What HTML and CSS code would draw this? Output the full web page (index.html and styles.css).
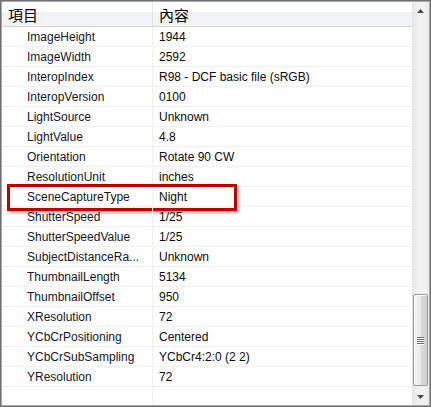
FILE: index.html
```html
<!DOCTYPE html>
<html>
<head>
<meta charset="utf-8">
<link rel="stylesheet" href="styles.css">
</head>
<body>
<div class="listview">
  <div class="content">
    <div class="header">
      <div class="hcell c1">項目</div>
      <div class="hcell c2">內容</div>
    </div>
    <div class="rows">
      <div class="row"><div class="cell c1">ImageHeight</div><div class="cell c2">1944</div></div>
      <div class="row"><div class="cell c1">ImageWidth</div><div class="cell c2">2592</div></div>
      <div class="row"><div class="cell c1">InteropIndex</div><div class="cell c2">R98 - DCF basic file (sRGB)</div></div>
      <div class="row"><div class="cell c1">InteropVersion</div><div class="cell c2">0100</div></div>
      <div class="row"><div class="cell c1">LightSource</div><div class="cell c2">Unknown</div></div>
      <div class="row"><div class="cell c1">LightValue</div><div class="cell c2">4.8</div></div>
      <div class="row"><div class="cell c1">Orientation</div><div class="cell c2">Rotate 90 CW</div></div>
      <div class="row"><div class="cell c1">ResolutionUnit</div><div class="cell c2">inches</div></div>
      <div class="row highlighted"><div class="cell c1">SceneCaptureType</div><div class="cell c2">Night</div><div class="mark"></div></div>
      <div class="row"><div class="cell c1">ShutterSpeed</div><div class="cell c2">1/25</div></div>
      <div class="row"><div class="cell c1">ShutterSpeedValue</div><div class="cell c2">1/25</div></div>
      <div class="row"><div class="cell c1">SubjectDistanceRa...</div><div class="cell c2">Unknown</div></div>
      <div class="row"><div class="cell c1">ThumbnailLength</div><div class="cell c2">5134</div></div>
      <div class="row"><div class="cell c1">ThumbnailOffset</div><div class="cell c2">950</div></div>
      <div class="row"><div class="cell c1">XResolution</div><div class="cell c2">72</div></div>
      <div class="row"><div class="cell c1">YCbCrPositioning</div><div class="cell c2">Centered</div></div>
      <div class="row"><div class="cell c1">YCbCrSubSampling</div><div class="cell c2">YCbCr4:2:0 (2 2)</div></div>
      <div class="row"><div class="cell c1">YResolution</div><div class="cell c2">72</div></div>
      <div class="row"><div class="cell c1"></div><div class="cell c2"></div></div>
    </div>
  </div>
  <div class="scrollbar">
    <div class="arrow up"><svg width="7" height="4" viewBox="0 0 7 4"><path d="M0 4 L3.5 0 L7 4 Z" fill="#4a4a4a"/></svg></div>
    <div class="track">
      <div class="thumb">
        <div class="grip"><span></span><span></span><span></span><span></span></div>
      </div>
    </div>
    <div class="arrow down"><svg width="7" height="4" viewBox="0 0 7 4"><path d="M0 0 L7 0 L3.5 4 Z" fill="#4a4a4a"/></svg></div>
  </div>
</div>
</body>
</html>
```
FILE: styles.css
```css
html, body {
  margin: 0;
  padding: 0;
  background: #ffffff;
}
.listview {
  width: 431px;
  height: 407px;
  box-sizing: border-box;
  border: 1px solid #707070;
  box-shadow: inset 0 0 0 1px #a8a8a8;
  padding: 1px;
  display: flex;
  overflow: hidden;
  font-family: "Liberation Sans", Arial, sans-serif;
  font-size: 12px;
  color: #111111;
}
.content {
  width: 410px;
  overflow: hidden;
  display: flex;
  flex-direction: column;
}
.header {
  display: flex;
  height: 24px;
  flex: 0 0 24px;
  border-bottom: 1px solid #d5d5d5;
  background: linear-gradient(to bottom, #ffffff 0, #ffffff 10px, #f2f3f5 10px, #f2f3f5 100%);
}
.hcell {
  box-sizing: border-box;
  font-family: "Noto Sans CJK TC", "Noto Sans CJK SC", sans-serif;
  font-size: 15px;
  line-height: 24px;
  color: #000;
  padding-left: 6px;
  padding-top: 1px;
}
.header .c1 {
  width: 151px;
  border-right: 1px solid #e3e3e3;
}
.header .c2 {
  flex: 1;
}
.rows {
  display: flex;
  flex-direction: column;
}
.row {
  display: flex;
  height: 20px;
  flex: 0 0 20px;
  box-sizing: border-box;
  border-bottom: 1px solid #f0f0f0;
  position: relative;
}
.cell {
  padding-top: 1px;
  line-height: 19px;
  white-space: nowrap;
  overflow: hidden;
  box-sizing: border-box;
}
.row .c1 {
  width: 151px;
  padding-left: 25px;
  border-right: 1px solid #f0f0f0;
  color: #14142a;
}
.row .c2 {
  flex: 1;
  padding-left: 6px;
  color: #0a0a0a;
}
.mark {
  position: absolute;
  left: 5px;
  top: -3px;
  width: 230px;
  height: 27px;
  box-sizing: border-box;
  border: 3px solid #c00000;
  box-shadow: 2px 2px 3px rgba(0, 0, 0, 0.35);
}
.scrollbar {
  width: 17px;
  display: flex;
  flex-direction: column;
  background: linear-gradient(to right, #e6e6e6 0, #f0f0f0 30%, #f2f2f2 70%, #e9e9e9 100%);
}
.arrow {
  height: 17px;
  flex: 0 0 17px;
  display: flex;
  align-items: center;
  justify-content: center;
}
.arrow svg {
  display: block;
}
.track {
  flex: 1;
  display: flex;
  flex-direction: column;
  justify-content: flex-end;
}
.thumb {
  height: 92px;
  margin: 0 1px 2px 1px;
  box-sizing: border-box;
  border: 1px solid #979797;
  border-radius: 2px;
  background: linear-gradient(to right, #f4f4f4 0, #ececec 45%, #dcdcdc 55%, #d0d0d0 100%);
  box-shadow: inset 1px 1px 0 #ffffff;
  display: flex;
  align-items: center;
  justify-content: center;
}
.grip {
  display: flex;
  flex-direction: column;
  gap: 1px;
}
.grip span {
  display: block;
  width: 7px;
  height: 1px;
  background: #6e6e6e;
  box-shadow: 0 1px 0 #ffffff;
}
```
